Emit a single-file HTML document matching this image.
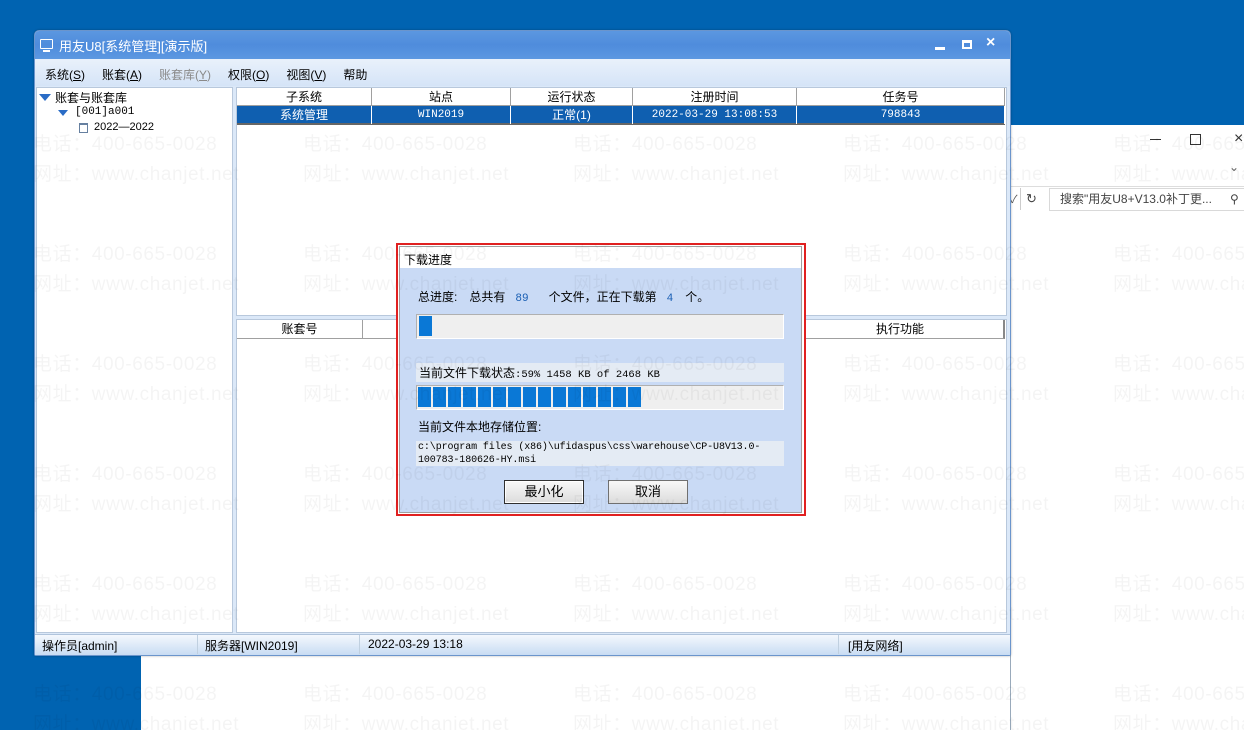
<!DOCTYPE html>
<html><head><meta charset="utf-8"><style>
*{margin:0;padding:0;box-sizing:border-box}
html,body{width:1244px;height:730px;overflow:hidden}
body{position:relative;background:#0063b1;font-family:"Liberation Sans","Noto Sans CJK SC",sans-serif;font-size:12px;color:#000}
.a{position:absolute}
.wm{position:absolute;color:rgba(0,0,0,0.045);font-size:19px;white-space:nowrap;font-family:"Liberation Sans","Noto Sans CJK SC",sans-serif;letter-spacing:0.6px;pointer-events:none}
.th{position:absolute;top:0;height:18px;line-height:18px;text-align:center;border-right:1px solid #a0a0a0}
.tr{position:absolute;top:0;height:18px;line-height:18px;text-align:center;border-right:1px solid #fff;color:#fff;font-family:"Liberation Mono","Noto Sans CJK SC",monospace;font-size:11px}
.mono{font-family:"Liberation Mono","Noto Sans CJK SC",monospace;font-size:11px}
.btn{position:absolute;top:480px;height:24px;width:80px;text-align:center;line-height:22px;font-size:13px;background:linear-gradient(#f8f8f8,#dcdcdc);border:1px solid #707070}
</style></head><body>
<div class="a" style="left:141px;top:125px;width:1103px;height:605px;background:#fff"></div>
<div class="a" style="left:1010px;top:125px;width:234px;height:605px;background:#fff;border-left:1px solid #9ab"></div>
<div class="a" style="left:1150px;top:139px;width:11px;height:1px;background:#333"></div>
<div class="a" style="left:1190px;top:134px;width:11px;height:11px;border:1px solid #333"></div>
<div class="a" style="left:1234px;top:130px;font-size:16px;color:#333">×</div>
<div class="a" style="left:1229px;top:160px;font-size:12px;color:#666">⌄</div>
<div class="a" style="left:1010px;top:186px;width:234px;height:1px;background:#ddd"></div>
<div class="a" style="left:1010px;top:191px;font-size:11px;color:#555">✓</div>
<div class="a" style="left:1020px;top:188px;width:22px;height:22px;border-left:1px solid #ccc;text-align:center;line-height:22px;color:#444;font-size:13px">↻</div>
<div class="a" style="left:1049px;top:188px;width:200px;height:23px;border:1px solid #d9d9d9;padding-left:10px;line-height:21px;color:#444">搜索"用友U8+V13.0补丁更...<span style="position:absolute;left:180px">⚲</span></div>

<div class="a" style="left:34px;top:30px;width:977px;height:626px;background:#dbe8f8;border:1px solid #6b95cc;border-radius:5px 5px 2px 2px;box-shadow:0 0 2px rgba(0,0,0,.3)"></div>
<div class="a" style="left:35px;top:31px;width:975px;height:28px;background:linear-gradient(#5b97e0,#4f8cdc 50%,#5c98e1);border-radius:4px 4px 0 0"></div>
<div class="a" style="left:40px;top:39px;width:13px;height:10px;border:1.5px solid #fff;border-radius:1px"></div>
<div class="a" style="left:43px;top:50px;width:7px;height:2px;background:#fff"></div>
<div class="a" style="left:59px;top:36px;color:#fff;font-size:13px">用友U8[系统管理][演示版]</div>
<div class="a" style="left:935px;top:47px;width:10px;height:3px;background:#fff"></div>
<div class="a" style="left:962px;top:40px;width:10px;height:9px;border:2px solid #fff;border-top-width:3px"></div>
<div class="a" style="left:986px;top:34px;color:#fff;font-size:16px;font-weight:bold">×</div>
<div class="a" style="left:35px;top:59px;width:975px;height:27px;background:linear-gradient(#e9f1fb,#d5e4f7)"></div>
<div class="a" style="left:45px;top:66px;font-size:12px;white-space:nowrap">系统(<u>S</u>)<span style="margin-left:17px">账套(<u>A</u>)</span><span style="margin-left:17px;color:#8a8a8a">账套库(<u>Y</u>)</span><span style="margin-left:17px">权限(<u>O</u>)</span><span style="margin-left:17px">视图(<u>V</u>)</span><span style="margin-left:17px">帮助</span></div>
<div class="a" style="left:36px;top:87px;width:197px;height:546px;background:#fff;border:1px solid #b8c8dc"></div>
<div class="a" style="left:39px;top:94px;width:0;height:0;border-left:6px solid transparent;border-right:6px solid transparent;border-top:7px solid #2a6cc6"></div>
<div class="a" style="left:55px;top:89px;font-size:12px">账套与账套库</div>
<div class="a" style="left:58px;top:110px;width:0;height:0;border-left:5px solid transparent;border-right:5px solid transparent;border-top:6px solid #2a6cc6"></div>
<div class="a mono" style="left:75px;top:106px;font-size:11px">[001]a001</div>
<div class="a" style="left:79px;top:123px;width:9px;height:10px;border:1px solid #6680a0;border-top:2px solid #6680a0"></div>
<div class="a" style="left:94px;top:121px;font-size:11px">2022—2022</div>
<div class="a" style="left:236px;top:87px;width:771px;height:229px;background:#fff;border:1px solid #b8c8dc"></div>
<div class="a" style="left:237px;top:88px;width:768px;height:18px;background:#fff;border-bottom:1px solid #a0a0a0">
<div class="th" style="left:0;width:135px">子系统</div><div class="th" style="left:135px;width:139px">站点</div><div class="th" style="left:274px;width:122px">运行状态</div><div class="th" style="left:396px;width:164px">注册时间</div><div class="th" style="left:560px;width:208px">任务号</div></div>
<div class="a" style="left:237px;top:106px;width:768px;height:19px;background:#0f5fb0;border-bottom:2px solid #666">
<div class="tr" style="left:0;width:135px;font-family:'Liberation Sans','Noto Sans CJK SC',sans-serif;font-size:12px">系统管理</div><div class="tr" style="left:135px;width:139px">WIN2019</div><div class="tr" style="left:274px;width:122px;font-family:'Liberation Sans','Noto Sans CJK SC',sans-serif;font-size:12px">正常(1)</div><div class="tr" style="left:396px;width:164px">2022-03-29 13:08:53</div><div class="tr" style="left:560px;width:208px">798843</div></div>
<div class="a" style="left:236px;top:319px;width:771px;height:314px;background:#fff;border:1px solid #b8c8dc"></div>
<div class="a" style="left:237px;top:320px;width:768px;height:19px;border-bottom:1px solid #a0a0a0;border-right:2px solid #888">
<div class="th" style="left:0;width:126px">账套号</div><div class="th" style="left:560px;width:206px;border:none">执行功能</div></div>
<div class="a" style="left:35px;top:634px;width:975px;height:21px;background:linear-gradient(#f4f8fd,#c8dcf3);border-top:1px solid #b0c4dc"></div>
<div class="a" style="left:42px;top:637px;font-size:12px">操作员[admin]</div>
<div class="a" style="left:197px;top:635px;width:1px;height:19px;background:#c0d0e0"></div>
<div class="a" style="left:205px;top:637px;font-size:12px">服务器[WIN2019]</div>
<div class="a" style="left:359px;top:635px;width:1px;height:19px;background:#c0d0e0"></div>
<div class="a" style="left:368px;top:637px;font-size:12px">2022-03-29 13:18</div>
<div class="a" style="left:838px;top:635px;width:1px;height:19px;background:#c0d0e0"></div>
<div class="a" style="left:848px;top:637px;font-size:12px">[用友网络]</div>

<div class="a" style="left:396px;top:243px;width:410px;height:273px;border:2px solid #e02020;background:#fff"></div>
<div class="a" style="left:399px;top:246px;width:403px;height:267px;border:1px solid #a0a0a0;background:#c9daf5"></div>
<div class="a" style="left:400px;top:247px;width:401px;height:21px;background:#fff"></div>
<div class="a" style="left:404px;top:251px;font-size:12px">下载进度</div>
<div class="a" style="left:418px;top:288px;font-size:12px;white-space:nowrap">总进度:<span style="margin-left:12px">总共有</span><span class="mono" style="margin-left:10px;color:#1a5fb4">89</span><span style="margin-left:20px">个文件，正在下载第</span><span class="mono" style="margin-left:10px;color:#1a5fb4">4</span><span style="margin-left:12px">个。</span></div>
<div class="a" style="left:416px;top:314px;width:368px;height:25px;background:#efefef;border:1px solid #b0b0b0;border-bottom-color:#fff;border-right-color:#fff"></div>
<div class="a" style="left:419px;top:316px;width:13px;height:20px;background:#0a78d6"></div>
<div class="a" style="left:416px;top:363px;width:368px;height:19px;background:#e4ebf4"></div>
<div class="a mono" style="left:419px;top:364px;font-size:10.5px;white-space:nowrap"><span style="font-family:'Liberation Sans','Noto Sans CJK SC',sans-serif;font-size:12px">当前文件下载状态</span>:59% 1458 KB of 2468 KB</div>
<div class="a" style="left:416px;top:385px;width:368px;height:25px;background:#efefef;border:1px solid #b0b0b0;border-bottom-color:#fff;border-right-color:#fff"></div>
<div class="a" style="left:418px;top:387px;width:224px;height:20px;background:repeating-linear-gradient(90deg,#0a78d6 0 13px,#efefef 13px 15px)"></div>
<div class="a" style="left:418px;top:418px;font-size:12px">当前文件本地存储位置:</div>
<div class="a" style="left:416px;top:441px;width:368px;height:25px;background:#e4ebf4"></div>
<div class="a mono" style="left:418px;top:441px;font-size:10px;line-height:13px;white-space:nowrap;letter-spacing:-0.1px">c:\program files (x86)\ufidaspus\css\warehouse\CP-U8V13.0-<br>100783-180626-HY.msi</div>
<div class="btn" style="left:504px;border:1px solid #303030;box-shadow:inset 0 0 0 1px #fff">最小化</div>
<div class="btn" style="left:608px">取消</div>

<div class="wm" style="left:33px;top:129px">电话：400-665-0028</div><div class="wm" style="left:303px;top:129px">电话：400-665-0028</div><div class="wm" style="left:573px;top:129px">电话：400-665-0028</div><div class="wm" style="left:843px;top:129px">电话：400-665-0028</div><div class="wm" style="left:1113px;top:129px">电话：400-665-0028</div>
<div class="wm" style="left:33px;top:159px">网址：www.chanjet.net</div><div class="wm" style="left:303px;top:159px">网址：www.chanjet.net</div><div class="wm" style="left:573px;top:159px">网址：www.chanjet.net</div><div class="wm" style="left:843px;top:159px">网址：www.chanjet.net</div><div class="wm" style="left:1113px;top:159px">网址：www.chanjet.net</div>
<div class="wm" style="left:33px;top:239px">电话：400-665-0028</div><div class="wm" style="left:303px;top:239px">电话：400-665-0028</div><div class="wm" style="left:573px;top:239px">电话：400-665-0028</div><div class="wm" style="left:843px;top:239px">电话：400-665-0028</div><div class="wm" style="left:1113px;top:239px">电话：400-665-0028</div>
<div class="wm" style="left:33px;top:269px">网址：www.chanjet.net</div><div class="wm" style="left:303px;top:269px">网址：www.chanjet.net</div><div class="wm" style="left:573px;top:269px">网址：www.chanjet.net</div><div class="wm" style="left:843px;top:269px">网址：www.chanjet.net</div><div class="wm" style="left:1113px;top:269px">网址：www.chanjet.net</div>
<div class="wm" style="left:33px;top:349px">电话：400-665-0028</div><div class="wm" style="left:303px;top:349px">电话：400-665-0028</div><div class="wm" style="left:573px;top:349px">电话：400-665-0028</div><div class="wm" style="left:843px;top:349px">电话：400-665-0028</div><div class="wm" style="left:1113px;top:349px">电话：400-665-0028</div>
<div class="wm" style="left:33px;top:379px">网址：www.chanjet.net</div><div class="wm" style="left:303px;top:379px">网址：www.chanjet.net</div><div class="wm" style="left:573px;top:379px">网址：www.chanjet.net</div><div class="wm" style="left:843px;top:379px">网址：www.chanjet.net</div><div class="wm" style="left:1113px;top:379px">网址：www.chanjet.net</div>
<div class="wm" style="left:33px;top:459px">电话：400-665-0028</div><div class="wm" style="left:303px;top:459px">电话：400-665-0028</div><div class="wm" style="left:573px;top:459px">电话：400-665-0028</div><div class="wm" style="left:843px;top:459px">电话：400-665-0028</div><div class="wm" style="left:1113px;top:459px">电话：400-665-0028</div>
<div class="wm" style="left:33px;top:489px">网址：www.chanjet.net</div><div class="wm" style="left:303px;top:489px">网址：www.chanjet.net</div><div class="wm" style="left:573px;top:489px">网址：www.chanjet.net</div><div class="wm" style="left:843px;top:489px">网址：www.chanjet.net</div><div class="wm" style="left:1113px;top:489px">网址：www.chanjet.net</div>
<div class="wm" style="left:33px;top:569px">电话：400-665-0028</div><div class="wm" style="left:303px;top:569px">电话：400-665-0028</div><div class="wm" style="left:573px;top:569px">电话：400-665-0028</div><div class="wm" style="left:843px;top:569px">电话：400-665-0028</div><div class="wm" style="left:1113px;top:569px">电话：400-665-0028</div>
<div class="wm" style="left:33px;top:599px">网址：www.chanjet.net</div><div class="wm" style="left:303px;top:599px">网址：www.chanjet.net</div><div class="wm" style="left:573px;top:599px">网址：www.chanjet.net</div><div class="wm" style="left:843px;top:599px">网址：www.chanjet.net</div><div class="wm" style="left:1113px;top:599px">网址：www.chanjet.net</div>
<div class="wm" style="left:33px;top:679px">电话：400-665-0028</div><div class="wm" style="left:303px;top:679px">电话：400-665-0028</div><div class="wm" style="left:573px;top:679px">电话：400-665-0028</div><div class="wm" style="left:843px;top:679px">电话：400-665-0028</div><div class="wm" style="left:1113px;top:679px">电话：400-665-0028</div>
<div class="wm" style="left:33px;top:709px">网址：www.chanjet.net</div><div class="wm" style="left:303px;top:709px">网址：www.chanjet.net</div><div class="wm" style="left:573px;top:709px">网址：www.chanjet.net</div><div class="wm" style="left:843px;top:709px">网址：www.chanjet.net</div><div class="wm" style="left:1113px;top:709px">网址：www.chanjet.net</div>
</body></html>
